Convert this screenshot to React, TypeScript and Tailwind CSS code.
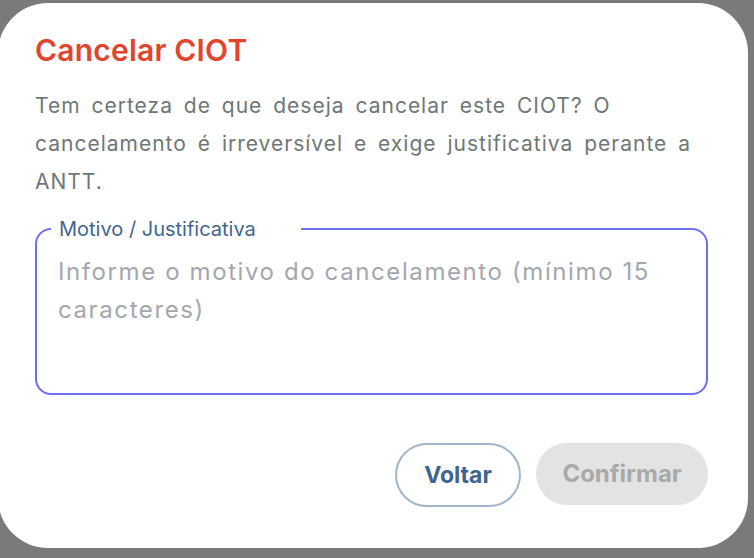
export default function App() {
  return (
    <div className="w-[754px] h-[558px] overflow-hidden bg-[#7a7a7a] pt-[3px] font-['Inter',sans-serif]">
      <div className="w-[750px] h-[545px] -ml-[2px] bg-white rounded-[50px] pl-[37px] pr-[40px] pt-[27px] flex flex-col">
        {/* Title */}
        <h2 className="text-[30px] leading-[40px] font-semibold tracking-[0.2px] text-[#e0452e]">Cancelar CIOT</h2>

        {/* Description */}
        <p className="mt-[17px] text-[21px] leading-[38px] tracking-[1px] [word-spacing:4px] text-[#6e7777]">
          Tem certeza de que deseja cancelar este CIOT? O cancelamento é irreversível e exige justificativa perante a ANTT.
        </p>

        {/* Reason field */}
        <fieldset className="mt-[18px] h-[176px] border-2 border-[#6b6ff0] rounded-[16px] px-[14px]">
          <legend className="pl-[8px] pr-[45px] text-[20px] leading-[20px] text-[#3f6690]">Motivo / Justificativa</legend>
          <textarea
            className="block w-full h-[124px] mt-[14px] px-[7px] resize-none outline-none text-[24px] leading-[38px] tracking-[1.6px] text-[#333] placeholder:text-[#a3a7ad]"
            placeholder="Informe o motivo do cancelamento (mínimo 15 caracteres)"
          />
        </fieldset>

        {/* Actions */}
        <div className="mt-[48px] flex justify-end gap-[15px]">
          <button className="h-[64px] w-[126px] rounded-full border-2 border-[#a0b5ca] text-[23px] font-bold text-[#3e6590]">
            Voltar
          </button>
          <button disabled className="h-[62px] w-[172px] rounded-full bg-[#e3e3e3] text-[24px] font-bold text-[#a9a9a9]">
            Confirmar
          </button>
        </div>
      </div>
    </div>
  );
}
